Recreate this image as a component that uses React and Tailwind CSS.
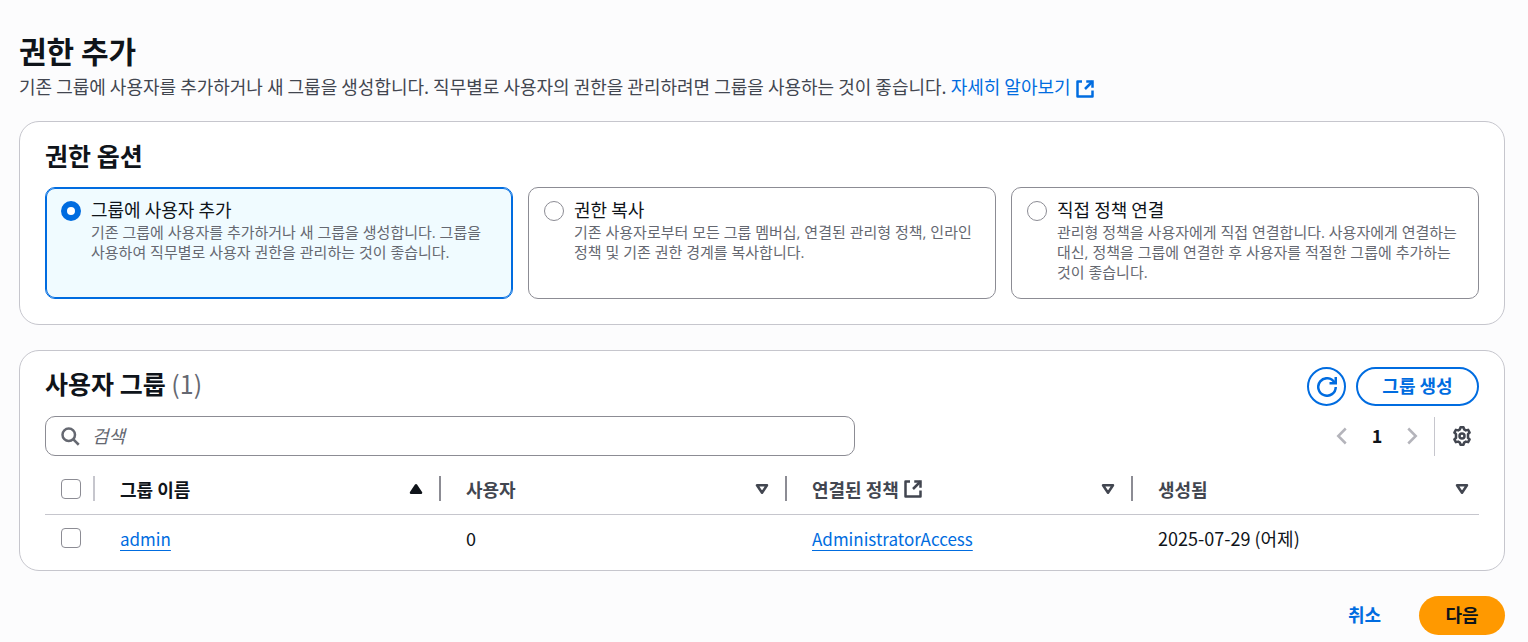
import React, { useState } from 'react';

const options = [
  {
    id: 'group',
    label: '그룹에 사용자 추가',
    description:
      '기존 그룹에 사용자를 추가하거나 새 그룹을 생성합니다. 그룹을 사용하여 직무별로 사용자 권한을 관리하는 것이 좋습니다.',
  },
  {
    id: 'copy',
    label: '권한 복사',
    description:
      '기존 사용자로부터 모든 그룹 멤버십, 연결된 관리형 정책, 인라인 정책 및 기존 권한 경계를 복사합니다.',
  },
  {
    id: 'attach',
    label: '직접 정책 연결',
    description:
      '관리형 정책을 사용자에게 직접 연결합니다. 사용자에게 연결하는 대신, 정책을 그룹에 연결한 후 사용자를 적절한 그룹에 추가하는 것이 좋습니다.',
  },
];

const groups = [
  { name: 'admin', users: 0, policy: 'AdministratorAccess', created: '2025-07-29 (어제)' },
];

const Icon = ({ children, className = '' }) => (
  <svg
    viewBox="0 0 16 16"
    fill="none"
    stroke="currentColor"
    strokeWidth="2"
    aria-hidden="true"
    className={`w-5 h-5 shrink-0 ${className}`}
  >
    {children}
  </svg>
);

const ExternalIcon = ({ className }) => (
  <Icon className={className}>
    <path d="M9 2h5v5" />
    <path d="m8 8 6-6" />
    <path d="M14 9.2V14H2V2h3.6" strokeLinejoin="round" />
  </Icon>
);

const SortIcon = ({ active }) => (
  <Icon>
    {active ? (
      <path d="M4 11h8L8 5l-4 6z" fill="currentColor" strokeLinejoin="round" />
    ) : (
      <path d="M4 5h8l-4 6-4-6z" strokeLinejoin="round" />
    )}
  </Icon>
);

const Column = ({ children, active = false, last = false }) => (
  <th scope="col" className="p-0 font-bold text-left">
    <div className="flex items-center">
      <div
        className={`flex flex-1 items-center justify-between pl-[25px] ${last ? 'pr-[7px]' : 'pr-[13px]'} ${
          active ? 'text-[#0f141a]' : 'text-[#424650]'
        }`}
      >
        <span className="flex items-center gap-1">{children}</span>
        <button type="button" aria-label="정렬">
          <SortIcon active={active} />
        </button>
      </div>
      {!last && <span className="w-[2px] h-[25px] bg-[#8c8c94]" />}
    </div>
  </th>
);

const Checkbox = ({ label }) => (
  <input
    type="checkbox"
    aria-label={label}
    className="block appearance-none w-5 h-5 ml-4 rounded border border-[#8c8c94] bg-white checked:bg-[#006ce0]"
  />
);

const TextLink = ({ href, children }) => (
  <a href={href} className="text-[17px] text-[#006ce0] underline decoration-1 underline-offset-4">
    {children}
  </a>
);

const App = () => {
  const [selected, setSelected] = useState('group');

  return (
    <main className="min-h-screen bg-[#fcfcfd] pt-8 pl-[19px] pr-[23px] pb-[7px] text-[18px] leading-6 text-[#0f141a] font-['Noto_Sans_CJK_KR',sans-serif]">
      <header>
        <h1 className="text-[30px] leading-9 font-bold">권한 추가</h1>
        <p className="mt-[5px] mb-[22px] leading-[26px] text-[#424650]">
          기존 그룹에 사용자를 추가하거나 새 그룹을 생성합니다. 직무별로 사용자의 권한을 관리하려면 그룹을 사용하는 것이 좋습니다.{' '}
          <a href="#learn" className="text-[#006ce0]">
            자세히 알아보기 <ExternalIcon className="inline-block" />
          </a>
        </p>
      </header>

      <section className="rounded-[20px] border border-[#c6c6cd] bg-white px-[25px] pt-[17px] pb-[25px]">
        <h2 className="text-[25px] leading-8 font-bold">권한 옵션</h2>
        <div className="mt-4 grid grid-cols-3 gap-[15px]">
          {options.map((option) => {
            const checked = selected === option.id;
            return (
              <label
                key={option.id}
                className={`flex items-start gap-[10px] rounded-[10px] border px-[15px] pt-[10px] pb-4 ${
                  checked ? 'border-[#006ce0] bg-[#f0fbff] inset-ring inset-ring-[#006ce0]' : 'border-[#8c8c94] bg-white'
                }`}
              >
                <input
                  type="radio"
                  name="permission"
                  checked={checked}
                  onChange={() => setSelected(option.id)}
                  className="appearance-none mt-[3px] w-5 h-5 shrink-0 rounded-full border border-[#8c8c94] bg-white checked:border-[6px] checked:border-[#006ce0]"
                />
                <span>
                  <span className="block pb-[2px] leading-[22px]">{option.label}</span>
                  <span className="block text-[15px] leading-5 text-[#656871] font-['Open_Sans','Noto_Sans_CJK_KR',sans-serif]">
                    {option.description}
                  </span>
                </span>
              </label>
            );
          })}
        </div>
      </section>

      <section className="mt-[25px] rounded-[20px] border border-[#c6c6cd] bg-white px-[25px] pt-4 pb-2">
        <div className="flex items-start justify-between">
          <h2 className="text-[25px] leading-8 font-bold">
            사용자 그룹 <span className="font-normal text-[#656871]">(1)</span>
          </h2>
          <div className="flex gap-[10px] text-[#006ce0]">
            <button
              type="button"
              aria-label="새로 고침"
              className="flex items-center justify-center w-[39px] h-[39px] rounded-full border-2 border-[#006ce0]"
            >
              <Icon>
                <path d="M10 5h5V0" />
                <path d="M15 8a7 7 0 1 1-.98-3.6" />
              </Icon>
            </button>
            <button type="button" className="h-[39px] w-[123px] rounded-[20px] border-2 border-[#006ce0] pb-1 font-bold">
              그룹 생성
            </button>
          </div>
        </div>

        <div className="mt-[10px] flex items-center justify-between">
          <label className="flex items-center gap-3 w-[810px] h-10 rounded-[10px] border border-[#8c8c94] px-[14px] text-[#656871]">
            <Icon>
              <circle cx="7" cy="7" r="5" />
              <path d="m15 15-4.5-4.5" />
            </Icon>
            <input
              type="search"
              aria-label="검색"
              placeholder="검색"
              className="flex-1 pb-[2px] outline-none text-[#0f141a] placeholder:italic placeholder:text-[#656871]"
            />
          </label>
          <div className="flex items-center">
            <button type="button" aria-label="이전 페이지" className="text-[#b4b4bb]">
              <Icon>
                <path d="m11 2-6 6 6 6" />
              </Icon>
            </button>
            <span className="w-[50px] pb-[2px] text-center font-bold">1</span>
            <button type="button" aria-label="다음 페이지" className="text-[#b4b4bb]">
              <Icon>
                <path d="m5 2 6 6-6 6" />
              </Icon>
            </button>
            <span className="ml-3 mr-[17px] w-px h-[39px] bg-[#c6c6cd]" />
            <button type="button" aria-label="기본 설정" className="mr-[7px] text-[#424650]">
              <Icon>
                <path
                  d="M6.3 2.700 6.800 1h2.400l.5 1.700 1.400.8 1.800-.4 1.200 2.100L12.800 6.500v3l1.300 1.300-1.200 2.100-1.800-.4-1.400.8-.5 1.700H6.800l-.5-1.700-1.400-.8-1.800.4-1.200-2.100 1.300-1.300v-3L1.900 5.200l1.200-2.100 1.800.4z"
                  strokeLinejoin="round"
                />
                <circle cx="8" cy="8" r="2" />
              </Icon>
            </button>
          </div>
        </div>

        <table className="mt-2 w-full table-fixed">
          <colgroup>
            <col className="w-[50px]" />
            <col />
            <col />
            <col />
            <col />
          </colgroup>
          <thead>
            <tr className="h-[50px] border-b border-[#c6c6cd]">
              <th scope="col" className="p-0">
                <div className="flex items-center justify-between">
                  <Checkbox label="모두 선택" />
                  <span className="w-[2px] h-[25px] bg-[#c6c6cd]" />
                </div>
              </th>
              <Column active>그룹 이름</Column>
              <Column>사용자</Column>
              <Column>
                연결된 정책 <ExternalIcon />
              </Column>
              <Column last>생성됨</Column>
            </tr>
          </thead>
          <tbody>
            {groups.map((group) => (
              <tr key={group.name} className="h-12">
                <td className="p-0">
                  <Checkbox label={group.name} />
                </td>
                <td className="p-0 pl-[25px]">
                  <TextLink href="#group">{group.name}</TextLink>
                </td>
                <td className="p-0 pl-[25px]">{group.users}</td>
                <td className="p-0 pl-[25px]">
                  <TextLink href="#policy">{group.policy}</TextLink>
                </td>
                <td className="p-0 pl-[25px]">{group.created}</td>
              </tr>
            ))}
          </tbody>
        </table>
      </section>

      <footer className="mt-[25px] flex justify-end gap-[10px] font-bold">
        <button type="button" className="h-[39px] px-7 pb-1 text-[#006ce0]">
          취소
        </button>
        <button type="button" className="h-[39px] w-[86px] rounded-[20px] bg-[#ff9900] pb-1">
          다음
        </button>
      </footer>
    </main>
  );
};

export default App;
